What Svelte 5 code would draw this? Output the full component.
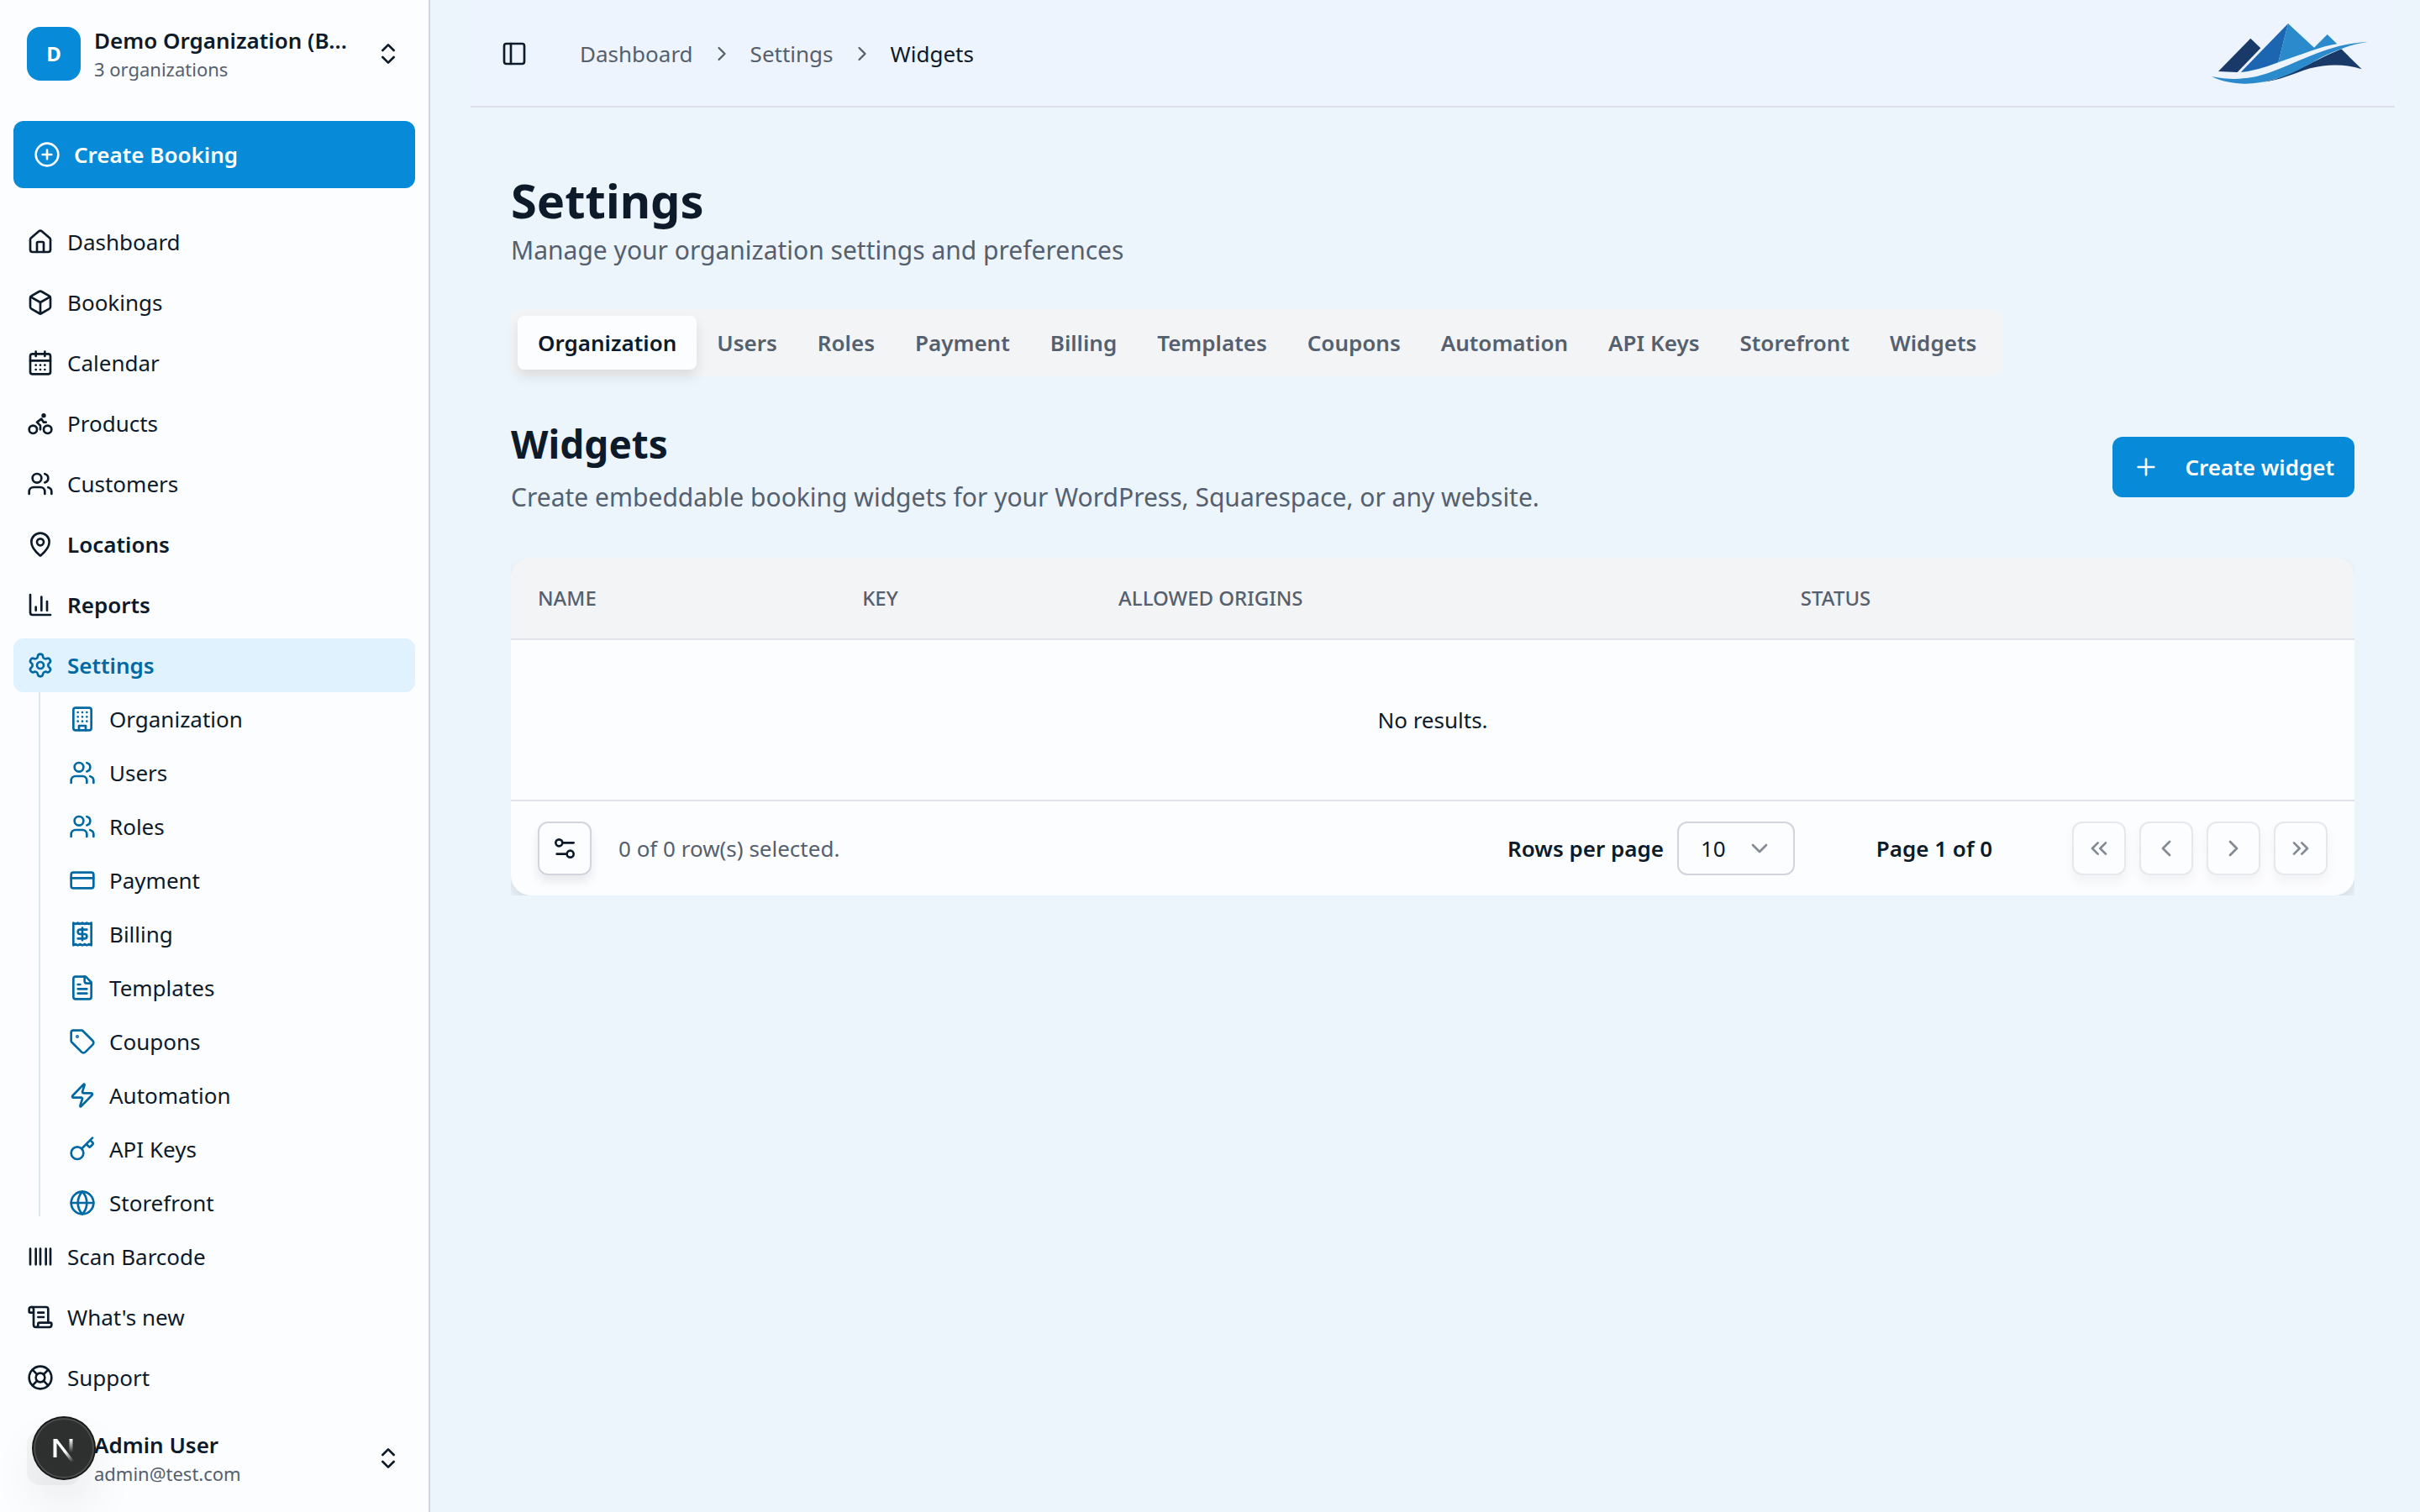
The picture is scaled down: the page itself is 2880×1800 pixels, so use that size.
<script>
    const icons = {
        house: '<path d="M15 21v-8a1 1 0 0 0-1-1h-4a1 1 0 0 0-1 1v8"/><path d="M3 10a2 2 0 0 1 .709-1.528l7-5.999a2 2 0 0 1 2.582 0l7 5.999A2 2 0 0 1 21 10v9a2 2 0 0 1-2 2H5a2 2 0 0 1-2-2z"/>',
        box: '<path d="M21 8a2 2 0 0 0-1-1.73l-7-4a2 2 0 0 0-2 0l-7 4A2 2 0 0 0 3 8v8a2 2 0 0 0 1 1.73l7 4a2 2 0 0 0 2 0l7-4A2 2 0 0 0 21 16Z"/><path d="m3.3 7 8.7 5 8.7-5M12 22V12"/>',
        calendar: '<path d="M8 2v4M16 2v4M3 10h18M8 14h.01M12 14h.01M16 14h.01M8 18h.01M12 18h.01M16 18h.01"/><rect width="18" height="18" x="3" y="4" rx="2"/>',
        bike: '<circle cx="18.5" cy="17.5" r="3.5"/><circle cx="5.5" cy="17.5" r="3.5"/><circle cx="15" cy="5" r="1"/><path d="M12 17.5V14l-3-3 4-3 2 3h2"/>',
        users: '<path d="M16 21v-2a4 4 0 0 0-4-4H6a4 4 0 0 0-4 4v2"/><circle cx="9" cy="7" r="4"/><path d="M22 21v-2a4 4 0 0 0-3-3.87M16 3.13a4 4 0 0 1 0 7.75"/>',
        pin: '<path d="M20 10c0 4.993-5.539 10.193-7.399 11.799a1 1 0 0 1-1.202 0C9.539 20.193 4 14.993 4 10a8 8 0 0 1 16 0"/><circle cx="12" cy="10" r="3"/>',
        chart: '<path d="M3 3v16a2 2 0 0 0 2 2h16M18 17V9M13 17V5M8 17v-3"/>',
        gear: '<path d="M9.671 4.136a2.34 2.34 0 0 1 4.659 0 2.34 2.34 0 0 0 3.319 1.915 2.34 2.34 0 0 1 2.33 4.033 2.34 2.34 0 0 0 0 3.831 2.34 2.34 0 0 1-2.33 4.033 2.34 2.34 0 0 0-3.319 1.915 2.34 2.34 0 0 1-4.659 0 2.34 2.34 0 0 0-3.32-1.915 2.34 2.34 0 0 1-2.33-4.033 2.34 2.34 0 0 0 0-3.831A2.34 2.34 0 0 1 6.35 6.051a2.34 2.34 0 0 0 3.319-1.915"/><circle cx="12" cy="12" r="3"/>',
        building: '<rect width="16" height="20" x="4" y="2" rx="2"/><path d="M9 22v-4h6v4M8 6h.01M12 6h.01M16 6h.01M8 10h.01M12 10h.01M16 10h.01M8 14h.01M12 14h.01M16 14h.01"/>',
        card: '<rect width="20" height="14" x="2" y="5" rx="2"/><path d="M2 10h20"/>',
        receipt: '<path d="M4 2v20l2-1 2 1 2-1 2 1 2-1 2 1 2-1 2 1V2l-2 1-2-1-2 1-2-1-2 1-2-1-2 1Z"/><path d="M16 8h-6a2 2 0 1 0 0 4h4a2 2 0 1 1 0 4H8M12 17.5v-11"/>',
        file: '<path d="M15 2H6a2 2 0 0 0-2 2v16a2 2 0 0 0 2 2h12a2 2 0 0 0 2-2V7Z"/><path d="M14 2v4a2 2 0 0 0 2 2h4M10 9H8M16 13H8M16 17H8"/>',
        tag: '<path d="M12.586 2.586A2 2 0 0 0 11.172 2H4a2 2 0 0 0-2 2v7.172a2 2 0 0 0 .586 1.414l8.704 8.704a2.426 2.426 0 0 0 3.42 0l6.58-6.58a2.426 2.426 0 0 0 0-3.42z"/><circle cx="7.5" cy="7.5" r=".5" fill="currentColor"/>',
        zap: '<path d="M4 14a1 1 0 0 1-.78-1.63l9.9-10.2a.5.5 0 0 1 .86.46l-1.92 6.02A1 1 0 0 0 13 10h7a1 1 0 0 1 .78 1.63l-9.9 10.2a.5.5 0 0 1-.86-.46l1.92-6.02A1 1 0 0 0 11 14z"/>',
        key: '<path d="m15.5 7.5 2.3 2.3a1 1 0 0 0 1.4 0l2.1-2.1a1 1 0 0 0 0-1.4L19 4M21 2l-9.6 9.6"/><circle cx="7.5" cy="15.5" r="5.5"/>',
        globe: '<circle cx="12" cy="12" r="10"/><path d="M12 2a14.5 14.5 0 0 0 0 20 14.5 14.5 0 0 0 0-20M2 12h20"/>',
        barcode: '<path d="M3 5v14M8 5v14M12 5v14M17 5v14M21 5v14"/>',
        scroll: '<path d="M15 12h-5M15 8h-5M19 17V5a2 2 0 0 0-2-2H4"/><path d="M8 21h12a2 2 0 0 0 2-2v-1a1 1 0 0 0-1-1H11a1 1 0 0 0-1 1v1a2 2 0 1 1-4 0V5a2 2 0 1 0-4 0v2a1 1 0 0 0 1 1h3"/>',
        buoy: '<circle cx="12" cy="12" r="10"/><circle cx="12" cy="12" r="4"/><path d="m4.93 4.93 4.24 4.24M14.83 9.17l4.24-4.24M14.83 14.83l4.24 4.24M9.17 14.83l-4.24 4.24"/>',
        circlePlus: '<circle cx="12" cy="12" r="10"/><path d="M8 12h8M12 8v8"/>',
        plus: '<path d="M5 12h14M12 5v14"/>',
        panel: '<rect width="18" height="18" x="3" y="3" rx="2"/><path d="M9 3v18"/>',
        sliders: '<path d="M20 7h-9M14 17H5"/><circle cx="17" cy="17" r="3"/><circle cx="7" cy="7" r="3"/>',
        upDown: '<path d="m7 15 5 5 5-5M7 9l5-5 5 5"/>',
        down: '<path d="m6 9 6 6 6-6"/>',
        left: '<path d="m15 18-6-6 6-6"/>',
        right: '<path d="m9 18 6-6-6-6"/>',
        first: '<path d="m11 17-5-5 5-5M18 17l-5-5 5-5"/>',
        last: '<path d="m6 17 5-5-5-5M13 17l5-5-5-5"/>'
    };

    const mainNav = [
        { label: 'Dashboard', icon: 'house' },
        { label: 'Bookings', icon: 'box' },
        { label: 'Calendar', icon: 'calendar' },
        { label: 'Products', icon: 'bike' },
        { label: 'Customers', icon: 'users' },
        { label: 'Locations', icon: 'pin', strong: true },
        { label: 'Reports', icon: 'chart', strong: true },
        { label: 'Settings', icon: 'gear', strong: true, active: true }
    ];

    const settingsNav = [
        { label: 'Organization', icon: 'building' },
        { label: 'Users', icon: 'users' },
        { label: 'Roles', icon: 'users' },
        { label: 'Payment', icon: 'card' },
        { label: 'Billing', icon: 'receipt' },
        { label: 'Templates', icon: 'file' },
        { label: 'Coupons', icon: 'tag' },
        { label: 'Automation', icon: 'zap' },
        { label: 'API Keys', icon: 'key' },
        { label: 'Storefront', icon: 'globe' }
    ];

    const bottomNav = [
        { label: 'Scan Barcode', icon: 'barcode' },
        { label: "What's new", icon: 'scroll' },
        { label: 'Support', icon: 'buoy' }
    ];

    const tabs = [...settingsNav.map((item) => item.label), 'Widgets'];
    let activeTab = $state('Organization');
    let pageSize = $state(10);

    const columns = [
        { title: 'Name', width: 17.6 },
        { title: 'Key', width: 13.9 },
        { title: 'Allowed origins', width: 37 },
        { title: 'Status', width: 31.5 }
    ];

    const pagers = [
        { icon: 'first', label: 'Go to first page' },
        { icon: 'left', label: 'Go to previous page' },
        { icon: 'right', label: 'Go to next page' },
        { icon: 'last', label: 'Go to last page' }
    ];
</script>

{#snippet icon(name)}
    <svg class="icon" viewBox="0 0 24 24" aria-hidden="true">{@html icons[name]}</svg>
{/snippet}

{#snippet navLink(item)}
    <a href="#{item.icon}" class="nav-link" class:strong={item.strong} class:active={item.active}>
        {@render icon(item.icon)}
        <span>{item.label}</span>
    </a>
{/snippet}

<div class="app">
    <aside class="sidebar">
        <button class="account">
            <span class="avatar">D</span>
            <span class="account-text">
                <span class="account-name">Demo Organization (B...</span>
                <span class="account-sub">3 organizations</span>
            </span>
            {@render icon('upDown')}
        </button>

        <button class="create-booking">
            {@render icon('circlePlus')}
            Create Booking
        </button>

        <nav class="nav main-nav">
            {#each mainNav as item}
                {@render navLink(item)}
            {/each}
            <div class="sub-nav">
                {#each settingsNav as item}
                    {@render navLink(item)}
                {/each}
            </div>
        </nav>

        <nav class="nav">
            {#each bottomNav as item}
                {@render navLink(item)}
            {/each}
        </nav>

        <button class="account">
            <span class="avatar muted"></span>
            <span class="account-text">
                <span class="account-name">Admin User</span>
                <span class="account-sub">admin@test.com</span>
            </span>
            {@render icon('upDown')}
        </button>

        <button class="dev-badge" aria-label="Open dev tools">
            <svg viewBox="0 0 40 40" aria-hidden="true">
                <defs>
                    <linearGradient id="stroke-diagonal" gradientUnits="userSpaceOnUse" x1="22" y1="24" x2="31" y2="36">
                        <stop stop-color="#fff" />
                        <stop offset="1" stop-color="#fff" stop-opacity="0" />
                    </linearGradient>
                    <linearGradient id="stroke-right" gradientUnits="userSpaceOnUse" x1="28" y1="9" x2="28" y2="25">
                        <stop stop-color="#fff" />
                        <stop offset="1" stop-color="#fff" stop-opacity="0" />
                    </linearGradient>
                </defs>
                <path d="M7.5 9H12L32 35 29 37 11.5 14V31H7.5Z" fill="url(#stroke-diagonal)" />
                <path d="M28.5 9V25" fill="none" stroke="url(#stroke-right)" stroke-width="4" />
            </svg>
        </button>
    </aside>

    <div class="main">
        <header class="topbar">
            <button class="toggle" aria-label="Toggle sidebar">{@render icon('panel')}</button>
            <nav class="breadcrumb" aria-label="Breadcrumb">
                <a href="#dashboard">Dashboard</a>
                {@render icon('right')}
                <a href="#settings">Settings</a>
                {@render icon('right')}
                <span class="current">Widgets</span>
            </nav>
            <svg class="logo" viewBox="456 84 558 216" role="img" aria-label="Company logo">
                <path fill="#193a68" d="M480 255 595 137 631 172 548 258Z" />
                <path fill="#1c66b1" d="M560 258 729 84 694 223Q614 254 560 258Z" />
                <path fill="#2a8acc" d="M729 84 822 170 869 123 904 157C850 164 780 194 694 223Z" />
                <path fill="#193a68" d="M919 175 992 247C932 228 870 228 808 244 742 264 700 288 636 293 720 283 800 225 919 175Z" />
                <path fill="#2a8acc" d="M456 273C530 288 594 284 664 259 770 221 880 154 1014 150 960 158 930 168 880 190 800 225 720 296 576 299 530 298 490 290 456 273Z" />
            </svg>
        </header>

        <main class="content">
            <h1>Settings</h1>
            <p class="lead">Manage your organization settings and preferences</p>

            <div class="tabs" role="tablist">
                {#each tabs as tab}
                    <button
                        role="tab"
                        class="tab"
                        class:selected={tab === activeTab}
                        aria-selected={tab === activeTab}
                        onclick={() => (activeTab = tab)}>{tab}</button>
                {/each}
            </div>

            <div class="section-head">
                <div>
                    <h2>Widgets</h2>
                    <p class="lead">Create embeddable booking widgets for your WordPress, Squarespace, or any website.</p>
                </div>
                <button class="create-widget">
                    {@render icon('plus')}
                    Create widget
                </button>
            </div>

            <div class="card-clip">
                <div class="card">
                    <table>
                        <colgroup>
                            {#each columns as column}
                                <col style="width: {column.width}%" />
                            {/each}
                        </colgroup>
                        <thead>
                            <tr>
                                {#each columns as column}
                                    <th scope="col">{column.title}</th>
                                {/each}
                            </tr>
                        </thead>
                        <tbody>
                            <tr>
                                <td colspan={columns.length}>No results.</td>
                            </tr>
                        </tbody>
                    </table>
                    <div class="table-footer">
                        <button class="square" aria-label="View options">{@render icon('sliders')}</button>
                        <span class="selected-count">0 of 0 row(s) selected.</span>
                        <label for="page-size">Rows per page</label>
                        <div class="select-wrap">
                            <select id="page-size" bind:value={pageSize}>
                                {#each [10, 20, 30, 40, 50] as size}
                                    <option value={size}>{size}</option>
                                {/each}
                            </select>
                            {@render icon('down')}
                        </div>
                        <span class="page-count">Page 1 of 0</span>
                        <div class="pagers">
                            {#each pagers as pager}
                                <button class="square" disabled aria-label={pager.label}>{@render icon(pager.icon)}</button>
                            {/each}
                        </div>
                    </div>
                </div>
            </div>
        </main>
    </div>
</div>

<style>
:global(body) {
    margin: 0;
    background: #ecf4fc;
}

.app {
    display: flex;
    min-height: 100vh;
    font-family: "Noto Sans", "Open Sans", sans-serif;
    font-size: 26px;
    line-height: 40px;
    color: #0c1a29;
}

.app * {
    box-sizing: border-box;
}

button,
select {
    font: inherit;
    color: inherit;
    background: none;
    border: none;
    padding: 0;
    margin: 0;
}

a {
    color: inherit;
    text-decoration: none;
}

h1,
h2,
p {
    margin: 0;
}

.icon {
    width: 32px;
    height: 32px;
    flex: none;
    fill: none;
    stroke: currentColor;
    stroke-width: 2;
    stroke-linecap: round;
    stroke-linejoin: round;
}

/* sidebar */

.sidebar {
    position: relative;
    flex: none;
    display: flex;
    flex-direction: column;
    width: 512px;
    height: 100vh;
    background: #fcfdff;
    border-right: 2px solid #d2d4dd;
}

.account {
    display: flex;
    align-items: center;
    gap: 16px;
    height: 128px;
    padding: 0 32px;
    text-align: left;
}

.avatar {
    display: grid;
    place-items: center;
    flex: none;
    width: 64px;
    height: 64px;
    border-radius: 16px;
    background: #078ad7;
    color: #fff;
    font-size: 24px;
    font-weight: 700;
}

.avatar.muted {
    background: #f3f4f6;
}

.account-text {
    flex: 1;
    min-width: 0;
    display: flex;
    flex-direction: column;
}

.account-name {
    white-space: nowrap;
    font-weight: 600;
    line-height: 36px;
}

.account-sub {
    font-size: 22px;
    line-height: 32px;
    color: #55606e;
}

.create-booking {
    display: flex;
    align-items: center;
    gap: 16px;
    height: 80px;
    margin: 16px 16px 32px;
    padding: 0 24px;
    border-radius: 12px;
    background: #078ad7;
    color: #fff;
    font-weight: 600;
}

.nav {
    display: flex;
    flex-direction: column;
    gap: 8px;
    padding: 0 16px;
}

.main-nav {
    flex: 1;
    min-height: 0;
    overflow: hidden;
}

.nav-link {
    flex: none;
    display: flex;
    align-items: center;
    gap: 16px;
    height: 64px;
    padding: 0 16px;
    border-radius: 12px;
}

.strong {
    font-weight: 600;
}

.active {
    background: #dff2fe;
    color: #0069a4;
}

.sub-nav {
    position: relative;
    display: flex;
    flex-direction: column;
    margin-top: -8px;
    padding-left: 50px;
}

.sub-nav::before {
    content: "";
    position: absolute;
    top: 0;
    bottom: 16px;
    left: 30px;
    width: 2px;
    background: #e1e7ef;
}

.sub-nav .nav-link .icon {
    color: #0069a4;
}

.dev-badge {
    position: absolute;
    left: 40px;
    bottom: 40px;
    display: grid;
    place-items: center;
    width: 72px;
    height: 72px;
    border-radius: 50%;
    background: #2e302f;
    box-shadow: 0 0 0 2px #171717, inset 0 0 0 2px #4a4b4a, 0 32px 64px -16px rgba(0, 0, 0, 0.24);
}

.dev-badge svg {
    width: 40px;
    height: 40px;
}

/* top bar */

.main {
    flex: 1;
    min-width: 0;
}

.topbar {
    display: flex;
    align-items: center;
    height: 128px;
    margin: 0 30px 0 48px;
    padding: 2px 32px 0 36px;
    background: #eef4fd;
    border-bottom: 2px solid #dde0e8;
}

.toggle {
    display: flex;
}

.breadcrumb {
    flex: 1;
    display: flex;
    align-items: center;
    gap: 20px;
    padding-left: 62px;
    color: #55606e;
}

.breadcrumb .icon {
    width: 28px;
    height: 28px;
}

.current {
    color: #0c1a29;
}

.logo {
    width: 186px;
    height: 72px;
}

/* page */

.content {
    padding: 78px 78px 0 96px;
}

h1 {
    margin-bottom: 4px;
    font-size: 56px;
    font-weight: 700;
    line-height: 64px;
}

h2 {
    margin-bottom: 8px;
    font-size: 46px;
    font-weight: 700;
    line-height: 64px;
}

.lead {
    font-size: 30px;
    line-height: 48px;
    color: #55606e;
}

.tabs {
    display: flex;
    width: fit-content;
    margin-top: 46px;
    padding: 8px;
    border-radius: 12px;
    background: #f3f4f6;
}

.tab {
    height: 64px;
    padding: 0 24px;
    border-radius: 8px;
    color: #55606e;
    font-weight: 600;
}

.tab.selected {
    background: #fcfdff;
    color: #0c1a29;
    box-shadow: 0 8px 16px rgba(0, 0, 0, 0.1);
}

.section-head {
    display: flex;
    align-items: center;
    justify-content: space-between;
    margin-top: 48px;
}

.create-widget {
    display: flex;
    align-items: center;
    gap: 30px;
    height: 72px;
    padding: 0 24px;
    border-radius: 12px;
    background: #078ad7;
    color: #fff;
    font-weight: 600;
}

/* clips the card's shadow so it only shows behind the rounded corners */
.card-clip {
    margin-top: 48px;
    overflow: hidden;
}

.card {
    border-radius: 24px;
    overflow: hidden;
    background: #fcfdff;
    box-shadow: 0 8px 16px rgba(0, 0, 0, 0.1);
}

table {
    width: 100%;
    table-layout: fixed;
    border-collapse: separate;
    border-spacing: 0;
}

th {
    height: 98px;
    padding: 0 32px;
    background: #f3f4f6;
    border-bottom: 2px solid #e1e3ea;
    color: #55606e;
    font-size: 24px;
    font-weight: 500;
    text-align: left;
    text-transform: uppercase;
}

td {
    height: 192px;
    padding: 0;
    border-bottom: 2px solid #e1e3ea;
    text-align: center;
}

.table-footer {
    display: flex;
    align-items: center;
    height: 112px;
    padding: 0 32px;
}

.square {
    display: grid;
    place-items: center;
    width: 64px;
    height: 64px;
    border: 2px solid #d2d4dd;
    border-radius: 12px;
    box-shadow: 0 8px 12px rgba(0, 0, 0, 0.08);
}

.square:disabled {
    opacity: 0.5;
}

.selected-count {
    flex: 1;
    margin-left: 32px;
    color: #55606e;
}

label,
.page-count {
    font-weight: 600;
}

.select-wrap {
    display: grid;
    align-items: center;
    width: 140px;
    margin-left: 16px;
}

.select-wrap > * {
    grid-area: 1 / 1;
}

select {
    appearance: none;
    height: 64px;
    padding: 0 26px;
    border: 2px solid #d2d4dd;
    border-radius: 12px;
}

.select-wrap .icon {
    justify-self: end;
    margin-right: 26px;
    color: #858c96;
    pointer-events: none;
}

.page-count {
    width: 200px;
    margin-left: 66px;
    text-align: center;
}

.pagers {
    display: flex;
    gap: 16px;
    margin-left: 64px;
}
</style>
